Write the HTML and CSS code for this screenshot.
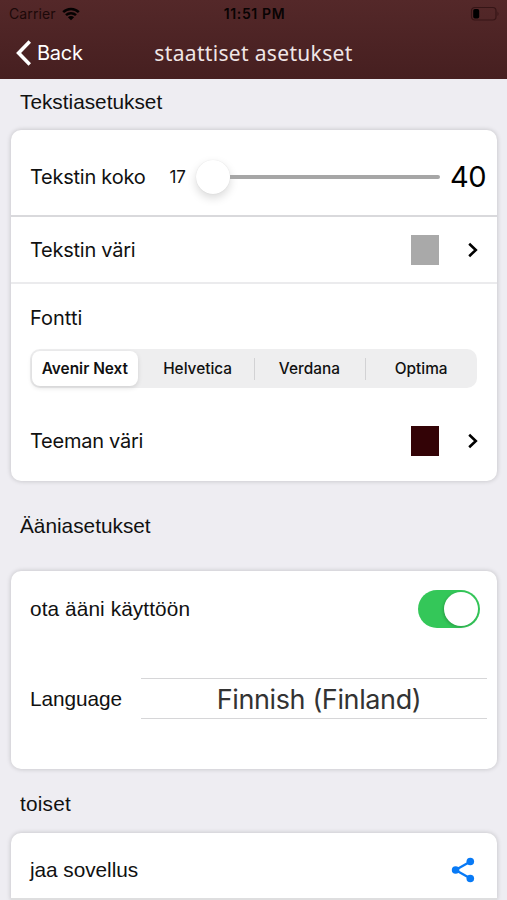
FILE: index.html
```html
<!DOCTYPE html>
<html lang="fi">
<head>
<meta charset="utf-8">
<title>staattiset asetukset</title>
<link rel="stylesheet" href="styles.css">
</head>
<body>
<header class="header">
  <div class="status">
    <div class="carrier"><span class="carrier-name">Carrier</span>
      <svg class="wifi" width="18" height="14" viewBox="0 0 18 14"><path d="M1.2 5.2a11 11 0 0 1 15.6 0M4 8.2a7.1 7.1 0 0 1 10 0" fill="none" stroke="#050202" stroke-width="2.5"/><path d="M9 13.3 5.9 10.2a4.4 4.4 0 0 1 6.2 0z" fill="#050202"/></svg>
    </div>
    <div class="clock">11:51 PM</div>
    <svg class="battery" width="30" height="16" viewBox="0 0 30 16"><rect x="1.5" y="1.5" width="24.5" height="12.5" rx="3.2" fill="none" stroke="#361516" stroke-width="1.2"/><rect x="3.2" y="3" width="6" height="9.5" rx="1.8" fill="#000"/><path d="M27.5 5.5q2 2.3 0 4.6z" fill="#361516"/></svg>
  </div>
  <nav class="nav">
    <a class="back"><svg width="16" height="26" viewBox="0 0 16 26"><path d="M14.8 1.5 3.6 13l11.2 11.5" fill="none" stroke="#fff" stroke-width="3.6"/></svg><span class="back-label">Back</span></a>
    <h1 class="title">staattiset asetukset</h1>
    <span></span>
  </nav>
</header>
<main>
  <h2 class="section first">Tekstiasetukset</h2>
  <section class="card text-card">
    <div class="row size-row">
      <span class="label">Tekstin koko</span>
      <span class="min">17</span>
      <div class="slider"><span class="thumb"></span><span class="track"></span></div>
      <span class="max">40</span>
    </div>
    <div class="row color-row">
      <span class="label">Tekstin väri</span>
      <span class="swatch grey"></span>
      <svg class="chevron" width="12" height="16" viewBox="0 0 12 16"><path d="M2.2 1.8 8.8 8l-6.6 6.2" fill="none" stroke="#000" stroke-width="2.6"/></svg>
    </div>
    <div class="font-row">
      <span class="label l-fontti">Fontti</span>
      <div class="segments">
        <span class="segment selected">Avenir Next</span>
        <span class="segment">Helvetica</span>
        <span class="segment divided">Verdana</span>
        <span class="segment divided">Optima</span>
      </div>
    </div>
    <div class="row theme-row">
      <span class="label">Teeman väri</span>
      <span class="swatch maroon"></span>
      <svg class="chevron" width="12" height="16" viewBox="0 0 12 16"><path d="M2.2 1.8 8.8 8l-6.6 6.2" fill="none" stroke="#000" stroke-width="2.6"/></svg>
    </div>
  </section>
  <h2 class="section second">Ääniasetukset</h2>
  <section class="card sound-card">
    <div class="row voice-row">
      <span class="label helv voice">ota ääni käyttöön</span>
      <span class="toggle"><span class="knob"></span></span>
    </div>
    <div class="row language-row">
      <span class="label helv">Language</span>
      <div class="picker"><span class="picked">Finnish (Finland)</span></div>
    </div>
  </section>
  <h2 class="section third">toiset</h2>
  <section class="card other-card">
    <div class="row share-row">
      <span class="label helv">jaa sovellus</span>
      <svg class="share" width="24" height="26" viewBox="0 0 24 26"><path d="M19.5 4.5 4.5 13l15 8.5" fill="none" stroke="#087af6" stroke-width="2.3"/><g fill="#087af6"><circle cx="19.3" cy="4.5" r="3.8"/><circle cx="4.6" cy="13" r="3.8"/><circle cx="19.3" cy="21.5" r="3.8"/></g></svg>
    </div>
  </section>
</main>
</body>
</html>
```
FILE: styles.css
```css
* { box-sizing: border-box; }
body {
  margin: 0;
  height: 900px;
  overflow: hidden;
  background: #eeedf2;
  color: #111;
  font-family: Inter, "Liberation Sans", sans-serif;
}
h1, h2 { margin: 0; font-weight: 400; }
svg { display: block; flex: none; }
.header {
  height: 79px;
  background: linear-gradient(#542829, #461f20);
}
.status {
  display: grid;
  grid-template-columns: 1fr auto 1fr;
  align-items: center;
  height: 27px;
  padding: 0 7px 0 9px;
  color: #080303;
}
.carrier { display: flex; align-items: center; gap: 6px; color: #1c0909; }
.carrier-name { font-size: 14px; letter-spacing: 0.1px; }
.clock { font-size: 14px; font-weight: 600; letter-spacing: 0.65px; }
.battery { justify-self: end; }
.nav {
  display: grid;
  grid-template-columns: 1fr auto 1fr;
  align-items: center;
  height: 51px;
  padding: 0 15px;
}
.back { display: flex; align-items: center; gap: 6px; color: #fff; }
.back-label { font-size: 20px; letter-spacing: -0.25px; }
.title {
  color: #f0e6e6;
  font-family: "Noto Sans", sans-serif;
  font-size: 21px;
  letter-spacing: 0.33px;
  white-space: nowrap;
}
.section {
  display: flex;
  align-items: center;
  padding-left: 20px;
  font-family: "Liberation Sans", sans-serif;
  font-size: 20.8px;
}
.first { height: 51px; padding-bottom: 5px; }
.second { height: 90px; }
.third { height: 64px; padding-top: 6px; letter-spacing: 0.2px; }
.card {
  margin: 0 10px 0 11px;
  background: #fff;
  border-radius: 10px;
  box-shadow: 0 0 5px rgba(0, 0, 0, 0.2);
}
.label { font-size: 20px; white-space: nowrap; letter-spacing: -0.25px; }
.helv { font-family: "Liberation Sans", sans-serif; font-size: 20.8px; letter-spacing: -0.05px; }
.voice { letter-spacing: 0.1px; }
.row { display: flex; align-items: center; padding-left: 19px; }
.text-card { height: 351px; }
.size-row { height: 87px; padding-top: 8px; border-bottom: 2px solid #d9d9dc; padding-right: 11px; }
.min { margin-left: 24px; font-size: 17px; }
.slider { display: flex; align-items: center; flex: 1; margin: 0 10px; }
.thumb {
  width: 34px;
  height: 34px;
  border-radius: 50%;
  background: #fff;
  box-shadow: 0 4px 10px rgba(0, 0, 0, 0.15), 0 0 1px rgba(0, 0, 0, 0.12);
}
.track { flex: 1; height: 4px; border-radius: 0 2px 2px 0; background: #a6a6a6; }
.max { font-size: 29px; letter-spacing: -0.5px; color: #000; }
.color-row { height: 67px; border-bottom: 2px solid #ebebed; padding: 1px 18px 0 19px; }
.swatch { width: 28px; height: 30px; margin-left: auto; }
.grey { background: #a9a9a9; }
.maroon { background: #330306; }
.chevron { margin-left: 28px; }
.font-row { height: 117px; padding: 22px 20px 0 19px; }
.l-fontti { display: block; line-height: 24px; letter-spacing: 0; }
.segments {
  display: grid;
  grid-template-columns: repeat(4, 1fr);
  height: 39px;
  margin-top: 19px;
  border-radius: 10px;
  background: #eeeeef;
}
.segment {
  display: flex;
  align-items: center;
  justify-content: center;
  font-size: 15.4px;
  font-weight: 500;
}
.selected {
  margin: 2px 4px 2px 2px;
  background: #fff;
  border-radius: 8px;
  font-weight: 600;
  box-shadow: 0 2px 5px rgba(0, 0, 0, 0.12);
}
.divided { background: linear-gradient(#d2d2d4, #d2d2d4) 0 50% / 1px 22px no-repeat; }
.theme-row { height: 80px; padding-right: 18px; }
.sound-card { height: 198px; }
.voice-row { height: 75px; padding-right: 17px; }
.toggle {
  display: flex;
  align-items: center;
  justify-content: flex-end;
  width: 62px;
  height: 38px;
  margin-left: auto;
  padding-right: 2px;
  border-radius: 19px;
  background: #34c759;
}
.knob { width: 34px; height: 34px; border-radius: 50%; background: #fff; box-shadow: -1px 1px 3px rgba(0, 0, 0, 0.2); }
.language-row { height: 105px; padding-right: 10px; }
.picker {
  display: flex;
  align-items: center;
  justify-content: center;
  width: 346px;
  height: 41px;
  margin-left: auto;
  padding: 1px 0 0 10px;
  border: solid #d6d6d8;
  border-width: 1px 0;
}
.picked { color: #333; font-size: 27px; letter-spacing: -0.38px; white-space: nowrap; }
.other-card { height: 67px; border-radius: 10px 10px 0 0; }
.share-row { height: 67px; padding: 9px 22px 0 19px; border-bottom: 2px solid #dededf; }
.share { margin-left: auto; }
```
